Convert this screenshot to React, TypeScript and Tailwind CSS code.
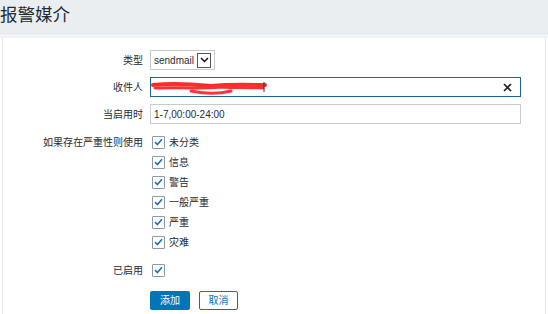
import React from 'react';

const levels = ['未分类', '信息', '警告', '一般严重', '严重', '灾难'];

const Check: React.FC = () => (
  <span className="flex h-[13px] w-[13px] items-center justify-center rounded-[1px] border border-[#8a9aa5] bg-white">
    <svg width="9" height="8" viewBox="0 0 9 8">
      <path d="M1 4.2 L3.4 6.5 L8 1.3" fill="none" stroke="#1f6fb0" strokeWidth="1.6" />
    </svg>
  </span>
);

const Row: React.FC<{ label: string; children: React.ReactNode; className?: string }> = ({ label, children, className }) => (
  <div className={'flex h-[20px] items-center ' + (className || '')}>
    <div className="w-[140px] shrink-0 text-right text-[10px] text-[#1f2c33]">{label}</div>
    <div className="ml-[7px] flex-1">{children}</div>
  </div>
);

const App: React.FC = () => {
  return (
    <div className="h-[314px] w-[548px] overflow-hidden bg-white" style={{ fontFamily: '"Liberation Sans", "Noto Sans CJK SC", sans-serif' }}>
      <div className="h-[33px] bg-[#ebeef0] pt-[3px] text-[17.5px] leading-[24px] text-[#1f2c33]">报警媒介</div>
      <div className="h-[5px] border-t border-[#e3e7ea] bg-[#f2f4f5]" />
      <div className="mx-[2px] h-[276px] border-x border-[#dfe4e7] bg-white pt-[12px]">
        <Row label="类型">
          <div className="flex h-[20px] w-[65px] items-center border border-[#c5cbcf] pl-[3px] text-[10px] text-[#1f2c33]">
            sendmail
            <span className="ml-[3px] flex h-[15px] w-[14px] items-center justify-center border border-[#555]">
              <svg width="9" height="6" viewBox="0 0 9 6">
                <path d="M1 1 L4.5 4.5 L8 1" fill="none" stroke="#111" strokeWidth="1.5" />
              </svg>
            </span>
          </div>
        </Row>
        <Row label="收件人" className="mt-[7px]">
          <div className="relative flex h-[20px] w-[371px] items-center border border-[#1f6294] bg-white">
            <svg className="absolute left-0 top-[1px]" width="120" height="18" viewBox="0 0 120 18">
              <path d="M2 6 C20 4 40 5 60 7 C80 5 100 6 114 6" fill="none" stroke="#ff2a2a" strokeWidth="4" strokeLinecap="round" />
              <path d="M4 9 C25 8 45 10 70 8 C85 9 100 8 112 9" fill="none" stroke="#ff3030" strokeWidth="3" strokeLinecap="round" />
              <path d="M40 12 C55 15 68 15 80 12" fill="none" stroke="#ff3535" strokeWidth="3" strokeLinecap="round" />
              <path d="M113 3 L113 13" stroke="#333" strokeWidth="1" />
            </svg>
            <svg className="absolute right-[8px]" width="9" height="9" viewBox="0 0 9 9">
              <path d="M1 1 L8 8 M8 1 L1 8" stroke="#222" strokeWidth="1.6" />
            </svg>
          </div>
        </Row>
        <Row label="当启用时" className="mt-[7px]">
          <div className="flex h-[20px] w-[371px] items-center border border-[#c5cbcf] pl-[3px] text-[10px] text-[#1f2c33]">
            1-7,00:00-24:00
          </div>
        </Row>
        <div className="mt-[8px] flex">
          <div className="flex h-[20px] w-[140px] shrink-0 items-center justify-end text-[10px] text-[#1f2c33]">如果存在严重性则使用</div>
          <div className="ml-[9px] flex flex-col">
            {levels.map((l) => (
              <div key={l} className="flex h-[20px] items-center text-[10px] text-[#1f2c33]">
                <Check />
                <span className="ml-[4px]">{l}</span>
              </div>
            ))}
          </div>
        </div>
        <Row label="已启用" className="mt-[8px]">
          <div className="ml-[2px]">
            <Check />
          </div>
        </Row>
        <div className="ml-[147px] mt-[11px] flex gap-[9px]">
          <button className="h-[19px] w-[40px] rounded-[2px] bg-[#0275b8] text-[10px] text-white">添加</button>
          <button className="h-[19px] w-[39px] rounded-[2px] border border-[#0275b8] bg-white text-[10px] text-[#0275b8]">取消</button>
        </div>
      </div>
    </div>
  );
};

export default App;
